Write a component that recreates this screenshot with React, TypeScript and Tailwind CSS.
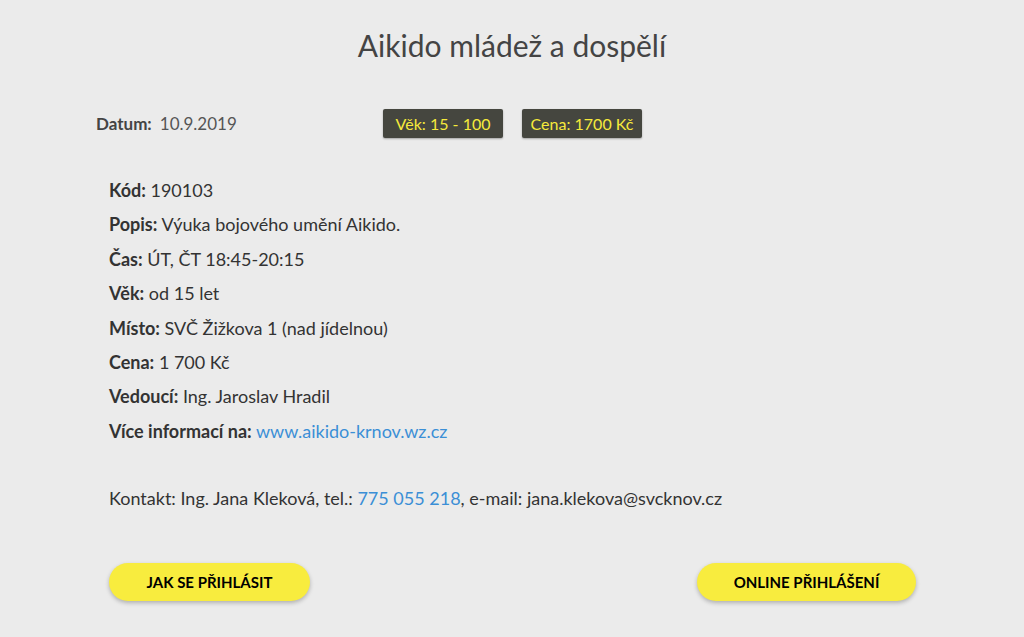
export default function App() {
  const rows: [string, React.ReactNode][] = [
    ["Kód:", "190103"],
    ["Popis:", "Výuka bojového umění Aikido."],
    ["Čas:", "ÚT, ČT 18:45-20:15"],
    ["Věk:", "od 15 let"],
    ["Místo:", "SVČ Žižkova 1 (nad jídelnou)"],
    ["Cena:", "1 700 Kč"],
    ["Vedoucí:", "Ing. Jaroslav Hradil"],
    [
      "Více informací na:",
      <a href="#" className="text-[#3b8fd6]">
        www.aikido-krnov.wz.cz
      </a>,
    ],
  ];

  return (
    <div className="min-h-[637px] bg-[#ebebeb] font-['Lato',sans-serif] text-[#333]">
      <div className="w-[820px] ml-[96px] pt-[27px]">
        {/* Title */}
        <h1 className="text-center text-[30px] leading-[36px] text-[#444] -mr-[12px]">
          Aikido mládež a dospělí
        </h1>

        {/* Date + badges */}
        <div className="mt-[45px] flex items-center h-[30px]">
          <div className="w-[287px] text-[17px] text-[#555] pt-[2px]">
            <span className="font-bold text-[#444]">Datum:</span>
            <span className="ml-2">10.9.2019</span>
          </div>
          <span className="w-[120px] text-center bg-[#45463f] text-[#f6ea3b] text-[16px] h-[29px] leading-[29px] rounded-[2px] shadow-[0_1px_2px_rgba(0,0,0,0.3)]">
            Věk: 15 - 100
          </span>
          <span className="w-[120px] ml-[19px] text-center bg-[#45463f] text-[#f6ea3b] text-[16px] h-[29px] leading-[29px] rounded-[2px] shadow-[0_1px_2px_rgba(0,0,0,0.3)]">
            Cena: 1700 Kč
          </span>
        </div>

        {/* Details */}
        <div className="mt-[35px] pl-[13px] text-[18px]">
          {rows.map(([label, value]) => (
            <div key={label} className="h-[34.4px] leading-[34.4px]">
              <span className="font-bold">{label}</span> {value}
            </div>
          ))}
          <div className="mt-[33px] h-[34px] leading-[34px]">
            Kontakt: Ing. Jana Kleková, tel.:{" "}
            <a href="#" className="text-[#3b8fd6]">
              775 055 218
            </a>
            , e-mail: jana.klekova@svcknov.cz
          </div>
        </div>

        {/* Buttons */}
        <div className="mt-[48px] pl-[13px] flex justify-between">
          <button className="w-[201px] h-[38px] rounded-full bg-[#f8ec3e] text-black font-bold text-[15px] uppercase shadow-[0_2px_4px_rgba(0,0,0,0.25)]">
            Jak se přihlásit
          </button>
          <button className="w-[219px] h-[38px] rounded-full bg-[#f8ec3e] text-black font-bold text-[15px] uppercase shadow-[0_2px_4px_rgba(0,0,0,0.25)]">
            Online přihlášení
          </button>
        </div>
      </div>
    </div>
  );
}
